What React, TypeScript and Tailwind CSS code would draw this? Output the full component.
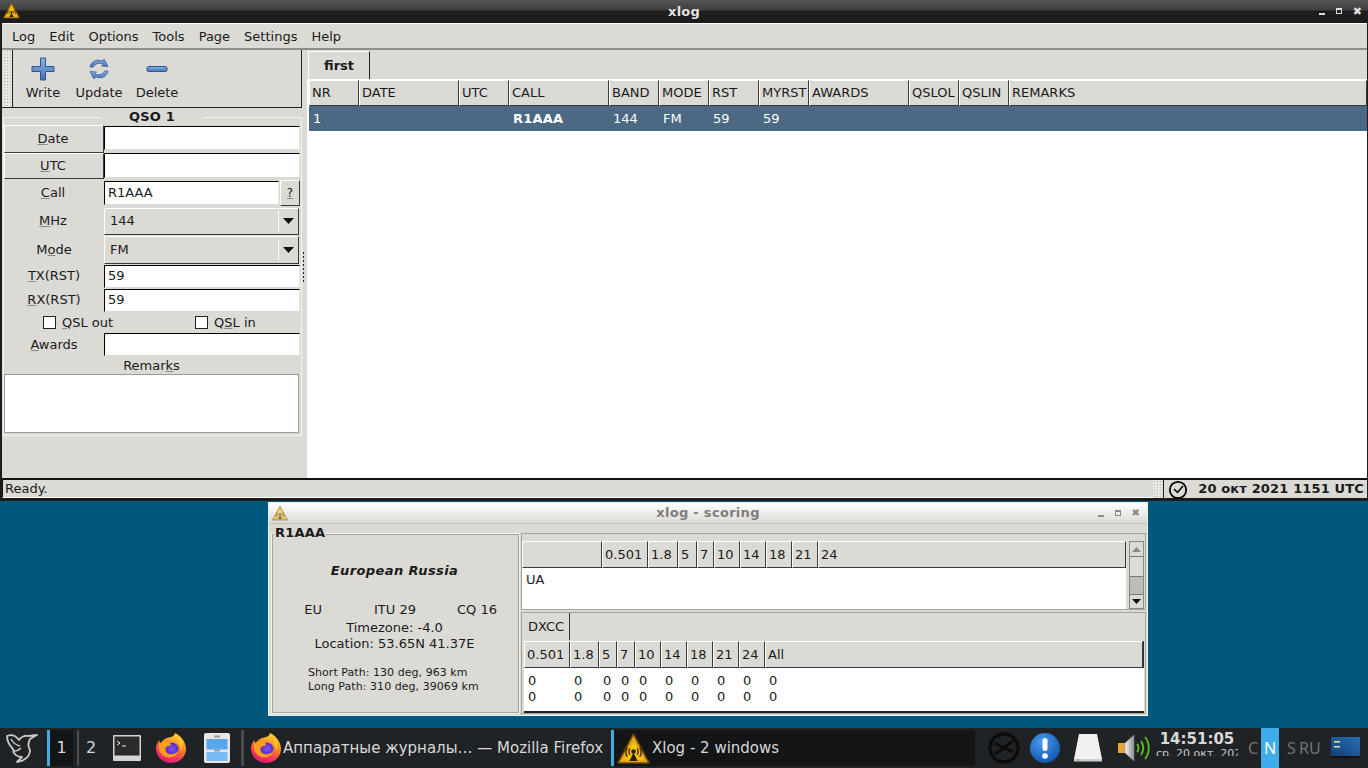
import type { ReactNode } from "react";

const raised = "border border-t-white border-l-white border-r-[#3a3a38] border-b-[#3a3a38] bg-[#dcdad5]";
const sunken = "border border-t-black border-l-black border-r-[#e8e6e1] border-b-[#dcdad5] bg-white";

const logColumns = [
  { name: "NR", w: "w-[50px]" },
  { name: "DATE", w: "w-[100px]" },
  { name: "UTC", w: "w-[50px]" },
  { name: "CALL", w: "w-[100px]" },
  { name: "BAND", w: "w-[50px]" },
  { name: "MODE", w: "w-[50px]" },
  { name: "RST", w: "w-[50px]" },
  { name: "MYRST", w: "w-[50px]" },
  { name: "AWARDS", w: "w-[100px]" },
  { name: "QSLOL", w: "w-[50px]" },
  { name: "QSLIN", w: "w-[50px]" },
  { name: "REMARKS", w: "flex-1" },
];

const topBands = [
  { name: "", w: "w-[80px]" },
  { name: "0.501", w: "w-[46px]" },
  { name: "1.8", w: "w-[30px]" },
  { name: "5", w: "w-[19px]" },
  { name: "7", w: "w-[17px]" },
  { name: "10", w: "w-[26px]" },
  { name: "14", w: "w-[26px]" },
  { name: "18", w: "w-[26px]" },
  { name: "21", w: "w-[26px]" },
  { name: "24", w: "flex-1" },
];

const bottomBands = [
  { name: "0.501", w: "w-[46px]" },
  { name: "1.8", w: "w-[29px]" },
  { name: "5", w: "w-[18px]" },
  { name: "7", w: "w-[18px]" },
  { name: "10", w: "w-[26px]" },
  { name: "14", w: "w-[26px]" },
  { name: "18", w: "w-[26px]" },
  { name: "21", w: "w-[26px]" },
  { name: "24", w: "w-[26px]" },
  { name: "All", w: "flex-1" },
];

function Key({ children }: { children: ReactNode }) {
  return <span className="underline decoration-[#8a8a8a] underline-offset-[1px]">{children}</span>;
}

function Input({ value, className }: { value?: string; className: string }) {
  return (
    <div className={`${sunken} ${className} flex items-center pl-[3px] text-[13px]`}>{value}</div>
  );
}

function Combo({ value, className }: { value: string; className: string }) {
  return (
    <div className={`${raised} ${className} w-[195px] flex items-center pl-[5px] border-r-[#3a3a38]`}>
      <span className="flex-1">{value}</span>
      <div className="h-[20px] w-px bg-[#8f8d88] border-r border-white mr-[3px]" />
      <svg width="13" height="8" viewBox="0 0 13 8" className="mr-[3px]">
        <path d="M1 1h11L6.5 7z" fill="#111" />
      </svg>
    </div>
  );
}

function FieldRow({ label, className, children }: { label: ReactNode; className: string; children: ReactNode }) {
  return (
    <div className={`flex items-center ${className}`}>
      <div className="w-[100px] text-center leading-none pb-[1px] pr-[2px]">{label}</div>
      {children}
    </div>
  );
}

function Check({ label, className }: { label: ReactNode; className: string }) {
  return (
    <div className={`flex items-center ${className}`}>
      <div className="w-[13px] h-[13px] border border-[#222] bg-white mr-[6px]" />
      {label}
    </div>
  );
}

function XlogIcon({ size, faded }: { size: number; faded?: boolean }) {
  return (
    <svg width={size} height={size} viewBox="0 0 32 32" className={faded ? "opacity-60" : ""}>
      <path d="M16 2 31 30H1z" fill="#e8a90e" stroke="#6b4a00" strokeWidth="1.5" strokeLinejoin="round" />
      <path d="M16 9 26 27H6z" fill="#f7c21c" />
      <circle cx="16" cy="19" r="2.2" fill="#2a2000" />
      <path d="M16 20 12 28h8z" fill="#2a2000" />
      <path d="M10 15c-2 3-2 6 0 9M22 15c2 3 2 6 0 9M12.5 16c-1.300 2-1.300 4 0 6M19.500 16c1.300 2 1.300 4 0 6" stroke="#2a2000" strokeWidth="1.200" fill="none" />
    </svg>
  );
}

function Firefox({ id }: { id: string }) {
  return (
    <svg width="30" height="30" viewBox="0 0 30 30">
      <defs>
        <linearGradient id={`${id}a`} x1="0.75" y1="0" x2="0.35" y2="1">
          <stop offset="0" stopColor="#ffe13a" />
          <stop offset="0.4" stopColor="#ff8a1f" />
          <stop offset="0.8" stopColor="#f2315c" />
          <stop offset="1" stopColor="#d91a78" />
        </linearGradient>
        <radialGradient id={`${id}b`}>
          <stop offset="0" stopColor="#8a4df0" />
          <stop offset="1" stopColor="#4f2fc0" />
        </radialGradient>
      </defs>
      <path d="M19 0c6 3 11 9 11 16 0 8-7 14-15 14S0 24 0 15.500C0 12 1.500 9 3.500 7c0 2 .5 3 1.500 4C6 7 9.500 5 13 4.500 16 4 18.500 3 19 0z" fill={`url(#${id}a)`} />
      <circle cx="16" cy="16" r="6.500" fill={`url(#${id}b)`} />
      <path d="M3 11c3-3 8-3 11-1 1.500 1.500.5 2.800-1 3-2 .3-4 1-3.800 3.500.2 2.800 3 5 6.800 4.800 3-.2 5.500-2 6.500-4-.8 4.500-5 7.500-9.500 7.200C7 24 3 19.500 3 15z" fill="#ff9d1f" />
      <path d="M19 1c3 3 4.500 6 3.500 9.500 2 2 3 4.500 3 7.500C28 12 25 5 19 1z" fill="#ffc52b" />
    </svg>
  );
}

function ToolIcon({ kind }: { kind: "plus" | "update" | "minus" }) {
  return (
    <svg width="26" height="26" viewBox="0 0 26 26">
      <defs>
        <linearGradient id={`tool-${kind}`} x1="0" y1="0" x2="0" y2="1">
          <stop offset="0" stopColor="#8fb3de" />
          <stop offset="1" stopColor="#3f72b5" />
        </linearGradient>
      </defs>
      {kind === "plus" && (
        <path d="M10.500 2h5v8.500H24v5h-8.500V24h-5v-8.500H2v-5h8.500z" fill="url(#tool-plus)" stroke="#2b5797" strokeLinejoin="round" />
      )}
      {kind === "minus" && (
        <rect x="3" y="10.500" width="20" height="5" rx="1.500" fill="url(#tool-minus)" stroke="#2b5797" />
      )}
      {kind === "update" && (
        <g fill="url(#tool-update)" stroke="#2b5797" strokeWidth="0.700" strokeLinejoin="round">
          <path d="M4 11C5 5 11 3 16 5l2-2 1.500 2.500L22 10.500l-6.500-.5 2-2C14 6.500 8.500 7.500 7.500 11z" />
          <path d="M22 15c-1 6-7 8-12 6l-2 2-1.500-2.500L4 15.500l6.500.5-2 2c3.500 1.500 9 .5 10-3z" />
        </g>
      )}
    </svg>
  );
}

function ToolButton({ kind, label, className }: { kind: "plus" | "update" | "minus"; label: string; className: string }) {
  return (
    <div className={`flex flex-col items-center ${className}`}>
      <ToolIcon kind={kind} />
      <span className="mt-[3px] leading-[16px]">{label}</span>
    </div>
  );
}

function DottedHandle({ className }: { className: string }) {
  return (
    <div className={`${className} bg-[radial-gradient(#b5b3ae_40%,#e8e6e1_45%)] bg-[length:3px_3px]`} />
  );
}

function TrayIcons() {
  return (
    <>
      <svg width="34" height="34" viewBox="0 0 34 34" className="ml-[12px] shrink-0">
        <circle cx="17" cy="17" r="14" fill="none" stroke="#0c0c0c" strokeWidth="3.500" />
        <path d="M8 12l9 5-9 6M26 10l-9 6 8 5" stroke="#0c0c0c" strokeWidth="2.800" fill="none" />
      </svg>
      <svg width="32" height="32" viewBox="0 0 32 32" className="ml-[8px] shrink-0">
        <defs>
          <radialGradient id="info-fill" cx="0.4" cy="0.3" r="0.8">
            <stop offset="0" stopColor="#4a9cf0" />
            <stop offset="1" stopColor="#0a4fa8" />
          </radialGradient>
        </defs>
        <circle cx="16" cy="16" r="15" fill="url(#info-fill)" />
        <rect x="13.500" y="6" width="5" height="13" rx="2.500" fill="#fff" />
        <circle cx="16" cy="24" r="2.800" fill="#fff" />
      </svg>
      <svg width="30" height="30" viewBox="0 0 30 30" className="ml-[12px] shrink-0">
        <path d="M6 1h18l5 25H1z" fill="#f1f1f1" />
        <path d="M1 26h28v2.500H1z" fill="#cfcfcf" />
        <circle cx="5" cy="27" r="0.900" fill="#3fc33f" />
      </svg>
      <svg width="34" height="30" viewBox="0 0 34 30" className="ml-[14px] shrink-0">
        <defs>
          <linearGradient id="cone-fill" x1="0" y1="0" x2="1" y2="0">
            <stop offset="0" stopColor="#f4f4f4" />
            <stop offset="1" stopColor="#8c8c8c" />
          </linearGradient>
        </defs>
        <rect x="1" y="10" width="7" height="10" fill="#e8a33a" />
        <path d="M8 10 17 2v26l-9-8z" fill="url(#cone-fill)" stroke="#8f8f8f" strokeWidth="0.500" />
        <path d="M20 11c2 2 2 6 0 8M24 8c3 4 3 10 0 14M28 4c5 6 5 16 0 22" stroke="#5dc21e" strokeWidth="1.800" fill="none" />
      </svg>
    </>
  );
}

export default function App() {
  return (
    <div className="w-[1368px] h-[768px] overflow-hidden bg-[#00587f] flex flex-col font-['DejaVu_Sans',sans-serif] text-[13px] text-[#1a1a1a]">
      {/* main xlog window */}
      <div className="h-[501px] flex flex-col shrink-0">
        <div className="h-[23px] flex items-center justify-between relative bg-[linear-gradient(#555_0,#3e3e3e_10px,#1e1e1e_11px,#1c1c1c_100%)]">
          <div className="ml-[3px] mt-[-3px]"><XlogIcon size={17} /></div>
          <span className="absolute inset-x-0 text-center font-bold text-[#e4e4e4] tracking-[0.2px]">xlog</span>
          <div className="flex items-center gap-[11px] mr-[6px] mb-[1px]">
            <div className="w-[6px] h-[2px] bg-[#ddd] mt-[5px]" />
            <div className="w-[6px] h-[6px] border border-t-2 border-[#ddd]" />
            <span className="text-[#ddd] text-[11px] font-bold leading-none">✖</span>
          </div>
        </div>
        <div className="flex-1 flex flex-col bg-[#dcdad5] border-l-2 border-r border-b-[3px] border-[#1c1c1c] min-h-0">
          {/* menu bar */}
          <div className="h-[27px] shrink-0 flex items-center gap-[14px] pl-[10px] pt-[1px] border-t border-white border-b-2 border-b-[#8f8d88]">
            {["Log", "Edit", "Options", "Tools", "Page", "Settings", "Help"].map((m) => (
              <span key={m}>{m}</span>
            ))}
          </div>
          <div className="flex-1 flex min-h-0">
            {/* left panel */}
            <div className="w-[303px] shrink-0 flex flex-col relative">
              <div className="h-[58px] w-[300px] shrink-0 flex border-r border-b border-[#222]">
                <DottedHandle className="w-[8px] ml-[1px] border-r border-[#222] box-content pr-px" />
                <div className="relative flex-1">
                  <ToolButton kind="plus" label="Write" className="absolute left-[9px] top-[6px] w-[42px]" />
                  <ToolButton kind="update" label="Update" className="absolute left-[60px] top-[6px] w-[52px]" />
                  <ToolButton kind="minus" label="Delete" className="absolute left-[119px] top-[6px] w-[50px]" />
                </div>
              </div>
              {/* QSO frame */}
              <div className="relative ml-px mt-[9px] w-[299px] h-[319px] border border-[#f4f3f0] pt-[7px]">
                <span className="absolute left-[97px] top-[-9px] w-[102px] text-center bg-[#dcdad5] font-bold leading-[16px] tracking-[0.2px]">QSO 1</span>
                <div className="flex h-[28px]">
                  <div className={`${raised} w-[100px] flex items-center justify-center pr-[2px]`}><span><Key>D</Key>ate</span></div>
                  <Input className="w-[196px] h-[24px] mt-px" />
                </div>
                <div className="flex h-[27px]">
                  <div className={`${raised} w-[100px] h-[26px] flex items-center justify-center pr-[2px]`}><span><Key>U</Key>TC</span></div>
                  <Input className="w-[196px] h-[25px]" />
                </div>
                <FieldRow label={<span><Key>C</Key>all</span>} className="h-[27px] pb-[2px]">
                  <Input value="R1AAA" className="w-[175px] h-[24px]" />
                  <div className={`${raised} w-[20px] h-[26px] ml-px flex items-center justify-center text-[12px]`}><Key>?</Key></div>
                </FieldRow>
                <FieldRow label={<span><Key>M</Key>Hz</span>} className="h-[28px]">
                  <Combo value="144" className="h-[27px]" />
                </FieldRow>
                <FieldRow label={<span className="pl-[2px]">M<Key>o</Key>de</span>} className="h-[29px]">
                  <Combo value="FM" className="h-[28px]" />
                </FieldRow>
                <FieldRow label={<span className="pl-[2px]"><Key>T</Key>X(RST)</span>} className="h-[24px]">
                  <Input value="59" className="w-[196px] h-[23px]" />
                </FieldRow>
                <FieldRow label={<span className="pl-[2px]"><Key>R</Key>X(RST)</span>} className="h-[24px]">
                  <Input value="59" className="w-[196px] h-[23px]" />
                </FieldRow>
                <div className="h-[21px] flex items-center">
                  <Check label={<span><Key>Q</Key>SL out</span>} className="ml-[39px] w-[152px]" />
                  <Check label={<span>Q<Key>S</Key>L in</span>} className="" />
                </div>
                <FieldRow label={<span className="pl-[2px]"><Key>A</Key>wards</span>} className="h-[23px]">
                  <Input className="w-[196px] h-[23px]" />
                </FieldRow>
                <div className="h-[18px] text-center leading-[18px] pr-[2px] pt-px">Remar<Key>k</Key>s</div>
                <div className="w-[295px] h-[59px] bg-white border border-[#9d9b95]" />
              </div>
              <div className="absolute right-0 top-[201px] h-[32px] w-[3px] bg-[radial-gradient(#222_40%,transparent_45%)] bg-[length:3px_4px]" />
            </div>
            {/* log sheet */}
            <div className="flex-1 flex flex-col min-w-0 pl-[2px]">
              <div className="h-[29px] shrink-0 flex items-end">
                <div className="w-[62px] h-[28px] ml-px border-t border-l border-white border-r border-r-[#222] flex items-center justify-center font-bold">first</div>
              </div>
              <div className="flex-1 flex flex-col border-l-2 border-white bg-white pt-px min-h-0">
                <div className="h-[26px] shrink-0 flex">
                  {logColumns.map((c) => (
                    <div key={c.name} className={`${raised} ${c.w} flex items-center pl-[2px]`}>{c.name}</div>
                  ))}
                </div>
                <div className="h-[25px] shrink-0 flex items-center bg-[#4b6983] text-white relative">
                  <span className="w-[204px] pl-[4px]">1</span>
                  <span className="w-[100px] font-bold tracking-[0.2px]">R1AAA</span>
                  <span className="w-[50px]">144</span>
                  <span className="w-[50px]">FM</span>
                  <span className="w-[50px]">59</span>
                  <span>59</span>
                </div>
                <div className="flex-1" />
              </div>
            </div>
          </div>
          {/* status bar */}
          <div className="h-[20px] shrink-0 flex border-t-2 border-[#111] items-stretch">
            <div className="flex-1 pl-[2px] border-l border-b border-l-[#111] border-b-white leading-[18px]">Ready.</div>
            <DottedHandle className="w-[9px] mr-[1px]" />
            <div className="w-[204px] flex items-center border-l border-[#222] pl-[4px] pr-[3px] relative">
              <svg width="20" height="20" viewBox="0 0 20 20" className="shrink-0 mt-[2px]">
                <circle cx="10" cy="10" r="8.200" fill="none" stroke="#000" strokeWidth="1.800" />
                <path d="M6 9l3.500 3.500L15 6" fill="none" stroke="#000" strokeWidth="1.500" />
              </svg>
              <span className="ml-auto font-bold whitespace-nowrap tracking-[0.15px]">20 окт 2021 1151 UTC</span>
            </div>
          </div>
        </div>
      </div>

      {/* scoring window */}
      <div className="ml-[268px] mt-px w-[880px] h-[214px] shrink-0 flex flex-col bg-[#dcdad5] border border-[#eeeeea]">
        <div className="h-[21px] shrink-0 flex items-center justify-between relative bg-[linear-gradient(#fff,#dcdad5)] border-b border-[#c8c6b8]">
          <div className="ml-[3px]"><XlogIcon size={16} faded /></div>
          <span className="absolute inset-x-0 text-center font-bold text-[#7d7d7a] tracking-[0.3px]">xlog - scoring</span>
          <div className="flex items-center gap-[11px] mr-[7px]">
            <div className="w-[6px] h-[2px] bg-[#8a8a86] mt-[5px]" />
            <div className="w-[6px] h-[6px] border border-t-2 border-[#8a8a86]" />
            <span className="text-[#8a8a86] text-[10px] font-bold leading-none">✖</span>
          </div>
        </div>
        <div className="flex-1 flex min-h-0 pt-[9px] pl-[2px]">
          <div className="relative w-[249px] h-[181px] border border-[#f4f3f0] outline outline-[#a5a39d] outline-offset-[-2px] flex flex-col items-center pr-[2px]">
            <span className="absolute left-[2px] top-[-9px] px-px bg-[#dcdad5] font-bold leading-[15px] tracking-[0.2px]">R1AAA</span>
            <div className="mt-[29px] font-bold italic leading-[16px] tracking-[0.4px]">European Russia</div>
            <div className="mt-[23px] w-full flex leading-[16px]">
              <span className="w-[76px] text-right pr-[26px]">EU</span>
              <span className="w-[89px] pl-[26px] whitespace-nowrap">ITU 29</span>
              <span className="flex-1 pl-[20px]">CQ 16</span>
            </div>
            <div className="mt-[2px] leading-[16px]">Timezone: -4.0</div>
            <div className="leading-[16px]">Location: 53.65N 41.37E</div>
            <div className="mt-[14px] w-full pl-[36px] text-[11px] leading-[14px] tracking-[0.05px]">Short Path: 130 deg, 963 km</div>
            <div className="w-full pl-[36px] text-[11px] leading-[14px] tracking-[0.05px]">Long Path: 310 deg, 39069 km</div>
          </div>
          <div className="ml-px flex-1 flex flex-col pr-px min-w-0">
            <div className="h-[77px] shrink-0 border border-[#a5a39d] flex pt-[7px]">
              <div className="flex-1 flex flex-col min-w-0">
                <div className="h-[27px] flex">
                  {topBands.map((b) => (
                    <div key={b.w + b.name} className={`${raised} ${b.w} flex items-center justify-start pl-[2px]`}>{b.name}</div>
                  ))}
                </div>
                <div className="flex-1 bg-white pl-[4px] leading-[24px]">UA</div>
              </div>
              <div className="w-[15px] ml-[3px] mr-px flex flex-col bg-[#bebcb6] border border-[#8a8883]">
                <div className="h-[14px] bg-[#dcdad5] flex items-center justify-center text-[#8a8a86]">
                  <svg width="9" height="5" viewBox="0 0 9 5"><path d="M0 5h9L4.500 0z" fill="currentColor" /></svg>
                </div>
                <div className="h-[21px] bg-[#dcdad5] border-y border-[#777]" />
                <div className="flex-1" />
                <div className="h-[14px] bg-[#dcdad5] flex items-center justify-center border-t border-[#777]">
                  <svg width="9" height="5" viewBox="0 0 9 5"><path d="M0 0h9L4.500 5z" fill="#111" /></svg>
                </div>
              </div>
            </div>
            <div className="mt-[2px] h-[102px] border border-[#a5a39d] flex flex-col pl-[1px] pr-px">
              <div className="h-[27px] flex shrink-0">
                <div className="w-[47px] border-r border-[#333] flex items-center pl-[5px]">DXCC</div>
              </div>
              <div className="h-[27px] mt-px ml-px flex shrink-0 border-r border-[#333]">
                {bottomBands.map((b) => (
                  <div key={b.name} className={`${raised} ${b.w} flex items-center pl-[2px]`}>{b.name}</div>
                ))}
              </div>
              <div className="flex-1 ml-px bg-white border-b-2 border-[#222] pt-[5px]">
                {[0, 1].map((row) => (
                  <div key={row} className="flex h-[16px] items-center">
                    {bottomBands.map((b) => (
                      <span key={b.name} className={`${b.w} pl-[4px]`}>0</span>
                    ))}
                  </div>
                ))}
              </div>
            </div>
          </div>
        </div>
      </div>

      {/* taskbar */}
      <div className="mt-auto h-[40px] shrink-0 flex items-center bg-[#1f2326] text-[#d8d8d8] text-[15px]">
        <svg width="34" height="34" viewBox="0 0 34 34" className="ml-[5px] shrink-0">
          <path d="M2 5c5-2 9 0 12 4 2-3 6-5 9-4l9-1-7 4c-2 4-2 8 0 11 0 6-5 11-13 12l5-5c-5 0-9-3-9-8-3-3-6-8-6-13z" fill="none" stroke="#c9c9c9" strokeWidth="1.800" strokeLinejoin="round" />
          <path d="M6 8c2 4 5 6 9 7M9 20c3 0 5-1 7-3" stroke="#c9c9c9" strokeWidth="1.500" fill="none" />
        </svg>
        <div className="ml-[8px] w-[26px] h-[36px] shrink-0 flex items-center justify-center bg-[#131517] border-l-[3px] border-[#3daee9] text-[16px]">1</div>
        <div className="ml-[4px] w-[2px] h-[36px] shrink-0 bg-[#4a4d50]" />
        <div className="w-[20px] ml-[2px] h-[36px] shrink-0 flex items-center justify-center text-[16px]">2</div>
        <svg width="30" height="28" viewBox="0 0 30 28" className="ml-[11px] shrink-0">
          <rect x="1" y="1" width="28" height="26" rx="1" fill="#d5d5d5" />
          <rect x="2.500" y="2.500" width="25" height="19" fill="#2a2a2a" />
          <path d="M5 7l3 2-3 2M10 12h4" stroke="#eee" strokeWidth="1" fill="none" />
        </svg>
        <div className="ml-[14px] shrink-0"><Firefox id="ffl" /></div>
        <svg width="28" height="32" viewBox="0 0 28 32" className="ml-[17px] shrink-0">
          <rect x="1" y="1" width="26" height="30" rx="2" fill="#e8e8e8" />
          <rect x="3.500" y="7" width="21" height="10.500" fill="#58a6ee" />
          <rect x="3.500" y="20" width="21" height="9" fill="#79bcf5" />
          <rect x="11" y="3.500" width="6" height="2" fill="#999" />
          <rect x="11" y="17.500" width="6" height="2" fill="#999" />
        </svg>
        <div className="ml-[10px] w-[3px] h-[36px] shrink-0 bg-[#4a4d50]" />
        <div className="ml-[7px] shrink-0"><Firefox id="ffr" /></div>
        <span className="ml-[2px] w-[328px] shrink-0 whitespace-nowrap overflow-hidden leading-[20px]">Аппаратные журналы… — Mozilla Firefox</span>
        <div className="h-[36px] w-[364px] shrink-0 flex items-center bg-[#131517] border-l-[3px] border-[#3daee9]">
          <div className="ml-[3px]"><XlogIcon size={33} /></div>
          <span className="ml-[2px]">Xlog - 2 windows</span>
        </div>
        <TrayIcons />
        <div className="ml-[5px] w-[82px] h-[25px] mt-[-10px] overflow-hidden flex flex-col items-center shrink-0">
          <span className="font-bold text-[15px] leading-[16px] whitespace-nowrap">14:51:05</span>
          <span className="self-start text-[11px] leading-[14px] whitespace-nowrap text-[#c8c8c8]">ср. 20 окт. 2021</span>
        </div>
        <div className="flex items-center text-[#6f7376] text-[16px] font-['Noto_Sans',sans-serif] ml-[10px] h-full shrink-0">
          <span className="w-[13px]">C</span>
          <span className="w-[18px] h-full flex items-center justify-center bg-[#3daee9] text-white">N</span>
          <span className="ml-[8px] w-[12px]">S</span>
          <span className="w-[21px]">RU</span>
        </div>
        <svg width="30" height="22" viewBox="0 0 30 22" className="ml-[11px] shrink-0">
          <defs>
            <linearGradient id="desk-thumb" x1="0" y1="1" x2="1" y2="0">
              <stop offset="0" stopColor="#0f3f7a" />
              <stop offset="1" stopColor="#2a6fb0" />
            </linearGradient>
          </defs>
          <rect width="29" height="20" fill="url(#desk-thumb)" />
          <rect x="3" y="4" width="6" height="1.500" fill="#e8e0a0" />
          <rect x="3" y="9" width="6" height="1.500" fill="#e8e0a0" />
          <rect y="19" width="29" height="2" fill="#111" />
        </svg>
      </div>
    </div>
  );
}
